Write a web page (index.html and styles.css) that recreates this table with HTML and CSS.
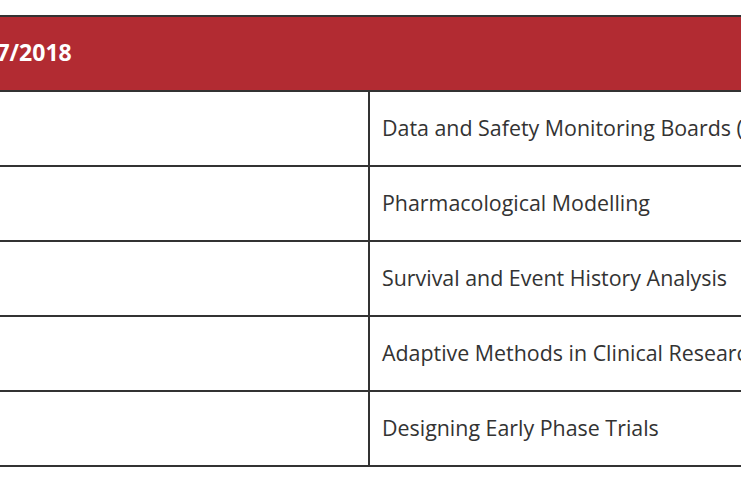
FILE: index.html
```html
<!DOCTYPE html>
<html lang="en">
<head>
<meta charset="utf-8">
<title>Courses</title>
<link rel="stylesheet" href="styles.css">
</head>
<body>
<div class="viewport">
  <table class="courses">
    <colgroup>
      <col class="col-left">
      <col class="col-right">
    </colgroup>
    <thead>
      <tr><th colspan="2" class="head-cell">2017/2018</th></tr>
    </thead>
    <tbody>
      <tr><td class="left"></td><td class="right">Data and Safety Monitoring Boards (DMCs)</td></tr>
      <tr><td class="left"></td><td class="right">Pharmacological Modelling</td></tr>
      <tr><td class="left"></td><td class="right">Survival and Event History Analysis</td></tr>
      <tr><td class="left"></td><td class="right">Adaptive Methods in Clinical Research</td></tr>
      <tr><td class="left"></td><td class="right">Designing Early Phase Trials</td></tr>
    </tbody>
  </table>
</div>
</body>
</html>
```
FILE: styles.css
```css
html, body {
  margin: 0;
  padding: 0;
  background: #ffffff;
}
.viewport {
  width: 741px;
  height: 486px;
  overflow: hidden;
  padding-top: 15px;
  box-sizing: border-box;
}
.courses {
  border-collapse: collapse;
  margin-left: -420px;
  width: 1300px;
  table-layout: fixed;
  font-family: "Open Sans", sans-serif;
}
.col-left {
  width: 788px;
}
.col-right {
  width: 512px;
}
.courses td, .courses th {
  border: 2px solid #333333;
  box-sizing: border-box;
}
.head-cell {
  background: #b22b32;
  color: #ffffff;
  font-weight: 700;
  font-size: 23px;
  text-align: left;
  height: 75px;
  padding: 0 0 3px 375px;
}
.left {
  height: 75px;
}
.right {
  font-size: 21.4px;
  color: #333333;
  padding: 0 0 2px 12px;
  white-space: nowrap;
  overflow: hidden;
}
```
